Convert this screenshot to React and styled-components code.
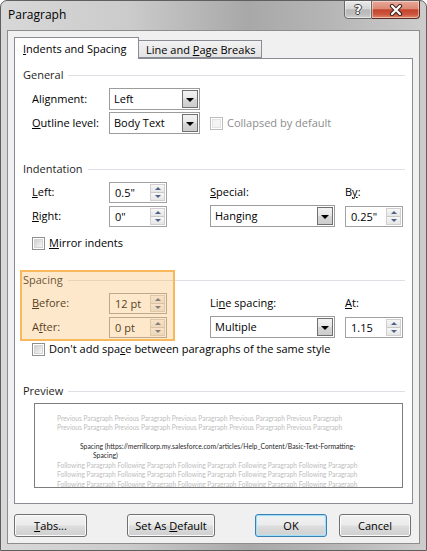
import React from 'react'
import styled, { createGlobalStyle } from 'styled-components'

const GlobalStyle = createGlobalStyle`
  html, body { margin: 0; padding: 0; background: #fff; }
  body {
    font-family: "Open Sans", "Noto Sans", sans-serif;
    font-size: 11px;
    color: #000;
  }
  * { box-sizing: border-box; }
`

const Window = styled.div`
  width: 427px;
  height: 551px;
  display: flex;
  flex-direction: column;
  border: 1px solid #5f5f5f;
  border-radius: 7px 7px 0 0;
  background: linear-gradient(90deg, #d8d8d8 0%, #cbcbcb 30%, #a8a8a8 58%, #b6b6b6 78%, #cdcdcd 100%);
  overflow: hidden;
`

const TitleBar = styled.div`
  height: 29px;
  flex: none;
  display: flex;
  align-items: flex-start;
  padding-left: 7px;
`

const Title = styled.div`
  flex: 1;
  padding-top: 6px;
  font-size: 12px;
  line-height: 16px;
`

const CaptionButton = styled.div`
  height: 19px;
  width: ${({ wide }) => (wide ? 48 : 28)}px;
  margin-top: -1px;
  margin-right: ${({ wide }) => (wide ? 6 : 0)}px;
  display: flex;
  align-items: center;
  justify-content: center;
  border: 1px solid ${({ wide }) => (wide ? '#5c2b23' : '#6a6a6a')};
  border-left: ${({ wide }) => (wide ? 'none' : '1px solid #6a6a6a')};
  border-radius: ${({ wide }) => (wide ? '0 0 4px 0' : '0 0 0 4px')};
  background: ${({ wide }) =>
    wide
      ? 'linear-gradient(#e9a898 0%, #dc8a76 45%, #c7442e 52%, #cc553c 78%, #e08a6c 100%)'
      : 'linear-gradient(#eaeaea 0%, #d6d6d6 45%, #b9b9b9 52%, #bdbdbd 78%, #d2d2d2 100%)'};
  box-shadow: inset 0 0 0 1px rgba(255, 255, 255, 0.45);
`

const Help = styled.span`
  color: #fff;
  font-family: "DejaVu Sans", sans-serif;
  font-weight: bold;
  font-size: 13px;
  line-height: 13px;
  text-shadow: -1px 0 #3a3a3a, 1px 0 #3a3a3a, 0 -1px #3a3a3a, 0 1px #3a3a3a;
`

const Client = styled.div`
  margin: 0 6px 6px 6px;
  height: 514px;
  flex: none;
  border: 1px solid #8d8d8d;
  background: #f0f0f0;
  padding: 6px 6px 0 6px;
  display: flex;
  flex-direction: column;
`

const TabRow = styled.div`
  height: 21px;
  display: flex;
  align-items: flex-end;
  position: relative;
  z-index: 1;
`

const Tab = styled.div`
  height: ${({ active }) => (active ? 22 : 18)}px;
  width: ${({ w }) => w}px;
  margin-bottom: ${({ active }) => (active ? -1 : 0)}px;
  border: 1px solid #898c95;
  border-bottom: ${({ active }) => (active ? 'none' : '1px solid #898c95')};
  border-left: ${({ active }) => (active ? '1px solid #898c95' : 'none')};
  background: ${({ active }) => (active ? '#fff' : 'linear-gradient(#f2f2f2, #e3e3e3)')};
  padding-left: ${({ active }) => (active ? 8 : 7)}px;
  line-height: ${({ active }) => (active ? 21 : 17)}px;
  font-size: 11px;
`

const Panel = styled.div`
  position: relative;
  height: 446px;
  border: 1px solid #898c95;
  background: #fff;
  padding-top: 9px;
`

const Heading = styled.div`
  display: flex;
  align-items: center;
  height: 14px;
  margin-top: ${({ mt }) => mt || 0}px;
  padding: 0 7px 0 8px;
  line-height: 14px;
  color: #1e1e1e;
  &::after {
    content: '';
    flex: 1;
    height: 1px;
    margin-left: 5px;
    background: #dde1e6;
  }
`

const FormGrid = styled.div`
  display: grid;
  grid-template-columns: 77px 101px 135px 58px;
  grid-auto-rows: 24px;
  margin-top: ${({ mt }) => mt || 0}px;
  padding-left: 17px;
  align-items: center;
`

const Label = styled.div`
  line-height: 14px;
  color: ${({ disabled }) => (disabled ? '#8d8d8d' : '#000')};
`

const U = styled.span`
  text-decoration: underline;
  text-underline-offset: 1px;
`

const SelectBox = styled.div`
  width: ${({ w }) => w}px;
  height: 22px;
  border: 1px solid #9c9c9c;
  background: #fff;
  display: flex;
  align-items: stretch;
  padding: 1px;
`

const SelectText = styled.div`
  flex: 1;
  padding-left: 3px;
  line-height: 18px;
`

const DropButton = styled.div`
  width: 16px;
  border: 1px solid #707070;
  background: linear-gradient(#f3f3f3 0%, #e6e6e6 50%, #d6d6d6 52%, #cdcdcd 100%);
  display: flex;
  align-items: center;
  justify-content: center;
  &::after {
    content: '';
    border-left: 4px solid transparent;
    border-right: 4px solid transparent;
    border-top: 4px solid #000;
    margin-top: 1px;
  }
`

const SpinBox = styled.div`
  width: 58px;
  height: 21px;
  border: 1px solid #a2a2a2;
  background: #fff;
  display: flex;
  align-items: stretch;
  padding: 1px;
`

const SpinText = styled.div`
  flex: 1;
  padding-left: 4px;
  line-height: 17px;
`

const SpinButtons = styled.div`
  width: 15px;
  display: flex;
  flex-direction: column;
  border: 1px solid #d0d0d0;
`

const SpinHalf = styled.div`
  flex: 1;
  display: flex;
  align-items: center;
  justify-content: center;
  background: linear-gradient(#f7f7f7, #e6e6e6);
  border-top: ${({ down }) => (down ? '1px solid #c9c9c9' : 'none')};
  &::after {
    content: '';
    border-left: 3px solid transparent;
    border-right: 3px solid transparent;
    ${({ down }) => (down ? 'border-top: 3px solid #4d6285;' : 'border-bottom: 3px solid #4d6285;')}
  }
`

const CheckRow = styled.div`
  display: flex;
  align-items: center;
  height: 16px;
  margin-top: ${({ mt }) => mt || 0}px;
  padding-left: ${({ pl }) => (pl === undefined ? 17 : pl)}px;
  gap: 4px;
`

const Checkbox = styled.div`
  width: 13px;
  height: 13px;
  flex: none;
  border: 1px solid ${({ disabled }) => (disabled ? '#bdbdbd' : '#8e8f8f')};
  background: #fff;
  padding: 1px;
  &::after {
    content: '';
    display: block;
    width: 100%;
    height: 100%;
    background: ${({ disabled }) =>
      disabled ? '#f4f4f4' : 'linear-gradient(135deg, #cfcfcf, #f6f6f6)'};
    border: 1px solid ${({ disabled }) => (disabled ? '#e4e4e4' : '#d4d4d4')};
    box-sizing: border-box;
  }
`

const Highlight = styled.div`
  position: absolute;
  left: 5px;
  top: 211px;
  width: 155px;
  height: 71px;
  border: 2px solid rgba(246, 176, 72, 0.85);
  background: rgba(250, 186, 96, 0.33);
  pointer-events: none;
`

const PreviewBox = styled.div`
  margin: 5px 0 0 19px;
  width: 369px;
  height: 85px;
  border: 1px solid #7d7d7d;
  background: #fff;
  padding: 10px 0 0 22px;
  font-family: "Lato", "Open Sans", sans-serif;
  font-size: 6.6px;
  overflow: hidden;
`

const PreviewLine = styled.div`
  white-space: nowrap;
  line-height: ${({ lh }) => lh || 9}px;
  height: ${({ lh }) => lh || 9}px;
  color: ${({ current }) => (current ? '#2a2a2a' : '#bdbdbd')};
  font-size: ${({ current }) => (current ? 6.8 : 6.6)}px;
  margin-top: ${({ mt }) => mt || 0}px;
  padding-left: ${({ indent }) => indent || 0}px;
`

const ButtonRow = styled.div`
  display: flex;
  margin-top: 10px;
`

const Button = styled.div`
  width: ${({ w }) => w}px;
  height: 23px;
  margin-left: ${({ ml }) => ml || 0}px;
  border: 1px solid ${({ primary }) => (primary ? '#3c7fb1' : '#707070')};
  border-radius: 3px;
  background: linear-gradient(#f2f2f2 0%, #ebebeb 48%, #dddddd 52%, #cfcfcf 100%);
  box-shadow: ${({ primary }) =>
    primary ? 'inset 0 0 0 1px #9ee0fb, inset 0 0 2px 1px #c9eefc' : 'inset 0 0 0 1px #fbfbfb'};
  text-align: center;
  line-height: 21px;
`

const prev = 'Previous Paragraph Previous Paragraph Previous Paragraph Previous Paragraph Previous Paragraph'
const follow =
  'Following Paragraph Following Paragraph Following Paragraph Following Paragraph Following Paragraph'

function Spin({ value }) {
  return (
    <SpinBox>
      <SpinText>{value}</SpinText>
      <SpinButtons>
        <SpinHalf />
        <SpinHalf down />
      </SpinButtons>
    </SpinBox>
  )
}

function Select({ value, w }) {
  return (
    <SelectBox w={w}>
      <SelectText>{value}</SelectText>
      <DropButton />
    </SelectBox>
  )
}

export default function App() {
  return (
    <>
      <GlobalStyle />
      <Window>
        <TitleBar>
          <Title>Paragraph</Title>
          <CaptionButton>
            <Help>?</Help>
          </CaptionButton>
          <CaptionButton wide>
            <svg width="14" height="12" viewBox="0 0 14 12">
              <path d="M3 2 L11 10 M11 2 L3 10" stroke="#3b2420" strokeWidth="4.2" strokeLinecap="round" />
              <path d="M3 2 L11 10 M11 2 L3 10" stroke="#fff" strokeWidth="2.2" strokeLinecap="round" />
            </svg>
          </CaptionButton>
        </TitleBar>

        <Client>
          <TabRow>
            <Tab active w={125}>
              <U>I</U>ndents and Spacing
            </Tab>
            <Tab w={123}>
              Line and <U>P</U>age Breaks
            </Tab>
          </TabRow>

          <Panel>
            <Heading>General</Heading>
            <FormGrid mt={5}>
              <Label>
                Ali<U>g</U>nment:
              </Label>
              <Select value="Left" w={91} />
              <div />
              <div />
              <Label>
                <U>O</U>utline level:
              </Label>
              <Select value="Body Text" w={91} />
              <CheckRow pl={0} style={{ gridColumn: 'span 2' }}>
                <Checkbox disabled />
                <Label disabled>Collapsed by default</Label>
              </CheckRow>
            </FormGrid>

            <Heading mt={27}>Indentation</Heading>
            <FormGrid mt={4}>
              <Label>
                <U>L</U>eft:
              </Label>
              <Spin value={'0.5"'} />
              <Label>
                <U>S</U>pecial:
              </Label>
              <Label>
                B<U>y</U>:
              </Label>
              <Label>
                <U>R</U>ight:
              </Label>
              <Spin value={'0"'} />
              <Select value="Hanging" w={125} />
              <Spin value={'0.25"'} />
            </FormGrid>
            <CheckRow mt={7}>
              <Checkbox />
              <Label>
                <U>M</U>irror indents
              </Label>
            </CheckRow>

            <Heading mt={22}>Spacing</Heading>
            <FormGrid mt={4}>
              <Label>
                <U>B</U>efore:
              </Label>
              <Spin value="12 pt" />
              <Label>
                Li<U>n</U>e spacing:
              </Label>
              <Label>
                <U>A</U>t:
              </Label>
              <Label>
                A<U>f</U>ter:
              </Label>
              <Spin value="0 pt" />
              <Select value="Multiple" w={125} />
              <Spin value="1.15" />
            </FormGrid>
            <CheckRow mt={2}>
              <Checkbox />
              <Label>
                Don't add spa<U>c</U>e between paragraphs of the same style
              </Label>
            </CheckRow>

            <Heading mt={27}>Preview</Heading>
            <PreviewBox>
              <PreviewLine>{prev}</PreviewLine>
              <PreviewLine>{prev}</PreviewLine>
              <PreviewLine current mt={9.5} indent={23}>
                Spacing (https://merrillcorp.my.salesforce.com/articles/Help_Content/Basic-Text-Formatting-
              </PreviewLine>
              <PreviewLine current indent={36}>
                Spacing)
              </PreviewLine>
              <PreviewLine mt={1} lh={9.5}>{follow}</PreviewLine>
              <PreviewLine lh={9.5}>{follow}</PreviewLine>
              <PreviewLine lh={9.5}>{follow}</PreviewLine>
            </PreviewBox>

            <Highlight />
          </Panel>

          <ButtonRow>
            <Button w={73}>
              <U>T</U>abs...
            </Button>
            <Button w={88} ml={40}>
              Set As <U>D</U>efault
            </Button>
            <Button w={72} ml={40} primary>
              OK
            </Button>
            <Button w={72} ml={12}>
              Cancel
            </Button>
          </ButtonRow>
        </Client>
      </Window>
    </>
  )
}
